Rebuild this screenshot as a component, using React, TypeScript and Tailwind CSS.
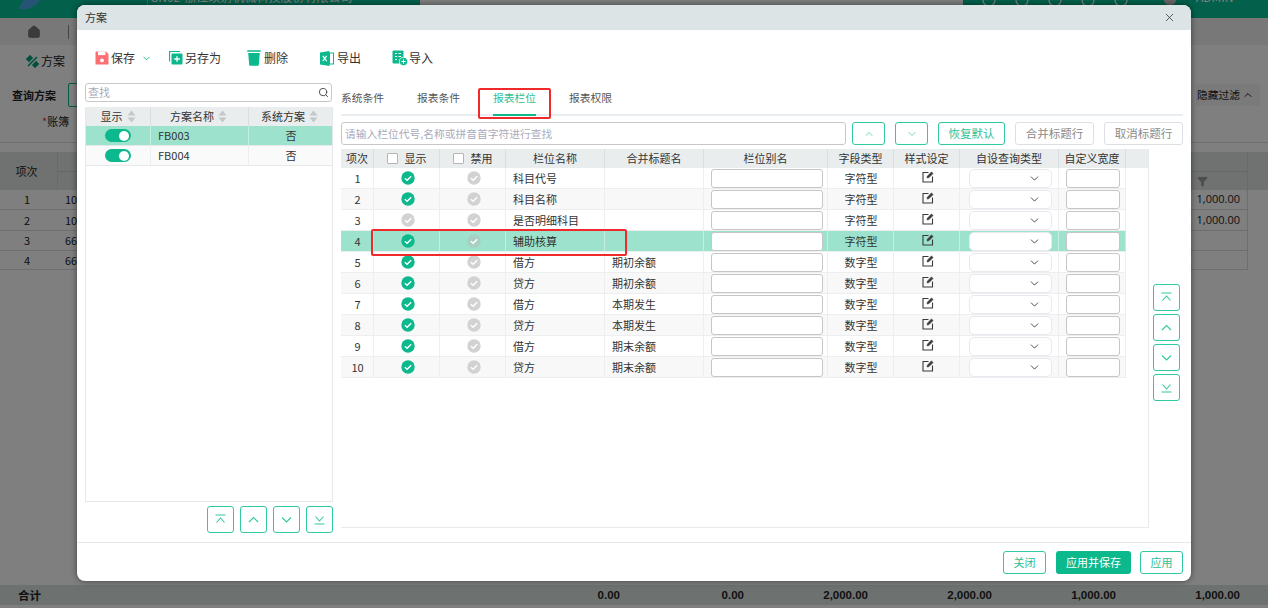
import React from "react";
import { ChevronDown, ChevronUp, Search, X, Home, Filter } from "lucide-react";

const G = "#0bb98c";
const font = { fontFamily: '"Noto Sans CJK SC", "Noto Sans", sans-serif' };

function Sort() {
  return (
    <svg width="9" height="13" viewBox="0 0 9 13" className="ml-1 shrink-0">
      <path d="M4.5 0.5 L8.5 5.5 H0.5 Z M0.5 7.5 H8.5 L4.5 12.5 Z" fill="#c3c9c9" />
    </svg>
  );
}

function Check({ on, dim }: { on: boolean; dim?: boolean }) {
  return (
    <svg width="14" height="14" viewBox="0 0 14 14">
      <circle cx="7" cy="7" r="6.7" fill={on ? G : dim ? "#a9cfc2" : "#d2d2d2"} />
      <path d="M3.8 7.2 L6.1 9.2 L10.2 5.2" fill="none" stroke="#fff" strokeWidth="1.4" />
    </svg>
  );
}

function Arrow({ kind }: { kind: "top" | "up" | "down" | "bottom" }) {
  return (
    <button className="w-[27px] h-[27px] rounded-[3px] border border-[#2fcaa0] bg-white flex items-center justify-center">
      <svg width="13" height="13" viewBox="0 0 13 13" fill="none" stroke="#2fcaa0" strokeWidth="1.1">
        {kind === "top" && <path d="M1.5 2 H11.5 M2.5 9.5 L6.5 5 L10.5 9.5" />}
        {kind === "up" && <path d="M2 9 L6.5 4.5 L11 9" />}
        {kind === "down" && <path d="M2 4.5 L6.5 9 L11 4.5" />}
        {kind === "bottom" && <path d="M2.5 3.5 L6.5 8 L10.5 3.5 M1.5 11 H11.5" />}
      </svg>
    </button>
  );
}

function Toggle() {
  return (
    <div className="w-[26px] h-[13px] rounded-full bg-[#0bb98c] flex items-center justify-end pr-[2px]">
      <div className="w-[10px] h-[10px] rounded-full bg-white" />
    </div>
  );
}

function EditIcon() {
  return (
    <svg width="12" height="12" viewBox="0 0 12 12" fill="none" stroke="#3a3a3a" strokeWidth="1.1" className="mb-[3px]">
      <path d="M6.5 1.5 H1 V11 H10.5 V5.5" />
      <path d="M5 7 L5.4 5.2 L9.4 0.9 L11.1 2.5 L7 6.6Z" fill="#3a3a3a" stroke="#3a3a3a" strokeWidth="0.6" />
    </svg>
  );
}

const SaveIcon = () => (
  <svg width="14" height="14" viewBox="0 0 14 14">
    <path d="M1 0.5 H11 L13.5 3 V13 a0.5 0.5 0 0 1 -0.5 0.5 H1 a0.5 0.5 0 0 1 -0.5 -0.5 V1 a0.5 0.5 0 0 1 0.5 -0.5Z" fill="#fb6f73" />
    <rect x="3" y="0.5" width="7.5" height="3.6" fill="#fff" />
    <circle cx="7" cy="9.4" r="1.9" fill="#fff" />
  </svg>
);
const SaveAsIcon = () => (
  <svg width="14" height="14" viewBox="0 0 14 14">
    <path d="M0.5 10.5 V0.5 H11" fill="none" stroke={G} strokeWidth="1.2" />
    <rect x="2.5" y="2.5" width="11" height="11" rx="1" fill={G} />
    <path d="M8 5.2 V10.8 M5.2 8 H10.8" stroke="#fff" strokeWidth="1.3" />
  </svg>
);
const TrashIcon = () => (
  <svg width="14" height="16" viewBox="0 0 14 16">
    <rect x="0.2" y="0.3" width="13.6" height="1.5" rx="0.5" fill={G} />
    <path d="M1.2 3 H12.8 L11.8 15 a0.8 0.8 0 0 1 -0.8 0.8 H3 a0.8 0.8 0 0 1 -0.8 -0.8Z" fill={G} />
  </svg>
);
const ExcelIcon = () => (
  <svg width="14" height="15" viewBox="0 0 14 15">
    <path d="M0 1.5 L9.5 0 V15 L0 13.5Z" fill={G} />
    <rect x="9.5" y="2" width="4" height="11" fill="none" stroke={G} strokeWidth="1" />
    <path d="M2.8 4.8 L6.7 10.2 M6.7 4.8 L2.8 10.2" stroke="#fff" strokeWidth="1.2" />
  </svg>
);
const ImportIcon = () => (
  <svg width="16" height="16" viewBox="0 0 16 16">
    <rect x="0.5" y="0.5" width="11" height="13" rx="1" fill={G} />
    <path d="M3 3.5 H5 M6.5 3.5 H9 M3 6.5 H5 M6.5 6.5 H9 M3 9.5 H5" stroke="#fff" strokeWidth="1.1" />
    <circle cx="11.5" cy="11.5" r="4.2" fill={G} stroke="#fff" strokeWidth="0.8" />
    <path d="M11.5 9.3 V13.7 M9.3 11.5 H13.7" stroke="#fff" strokeWidth="1.1" />
  </svg>
);

const rows = [
  { n: 1, show: true, name: "科目代号", group: "", type: "字符型" },
  { n: 2, show: true, name: "科目名称", group: "", type: "字符型" },
  { n: 3, show: false, name: "是否明细科目", group: "", type: "字符型" },
  { n: 4, show: true, name: "辅助核算", group: "", type: "字符型" },
  { n: 5, show: true, name: "借方", group: "期初余额", type: "数字型" },
  { n: 6, show: true, name: "贷方", group: "期初余额", type: "数字型" },
  { n: 7, show: true, name: "借方", group: "本期发生", type: "数字型" },
  { n: 8, show: true, name: "贷方", group: "本期发生", type: "数字型" },
  { n: 9, show: true, name: "借方", group: "期末余额", type: "数字型" },
  { n: 10, show: true, name: "贷方", group: "期末余额", type: "数字型" },
];

const COLS = "grid grid-cols-[33px_66px_66px_99px_99px_124px_66px_66px_99px_67px]";

function Box() {
  return <span className="w-[11px] h-[11px] bg-white border border-[#b5b5b5] rounded-[1px] mr-[7px] shrink-0" />;
}

function Head({ children }: { children: React.ReactNode }) {
  return <div className="flex items-center justify-center border-r border-[#d9dee3]">{children}</div>;
}

function FieldTable() {
  return (
    <div className="w-[808px] h-[379px] border border-[#e8eaee] border-l-0 border-t-0 text-[11px] text-[#333] leading-none">
      <div className="flex h-[19px] bg-[#e9eded]">
        <div className={`${COLS} w-[785px]`}>
          <Head>项次</Head>
          <Head><Box />显示</Head>
          <Head><Box />禁用</Head>
          <Head>栏位名称</Head>
          <Head>合并标题名</Head>
          <Head>栏位别名</Head>
          <Head>字段类型</Head>
          <Head>样式设定</Head>
          <Head>自设查询类型</Head>
          <Head>自定义宽度</Head>
        </div>
      </div>
      {rows.map((r) => {
        const sel = r.n === 4;
        const line = sel ? "border-[#c3eee0]" : "border-[#eceef0]";
        const text = `flex items-center justify-center pl-px pt-px border-r ${line}`;
        const center = `flex items-center justify-center pl-[2px] border-r ${line}`;
        return (
          <div
            key={r.n}
            className={`${COLS} w-[785px] h-[21px] border-b border-[#eceef0] ${sel ? "bg-[#9de2cc]" : r.n % 2 === 0 ? "bg-[#f8f8f8]" : "bg-white"}`}
          >
            <div className={text}>{r.n}</div>
            <div className={center}>
              <Check on={r.show} />
            </div>
            <div className={center}>
              <Check on={false} dim={sel} />
            </div>
            <div className={`flex items-center pl-[7px] pt-px border-r ${line}`}>{r.name}</div>
            <div className={`flex items-center pl-[7px] pt-px border-r ${line}`}>{r.group}</div>
            <div className={center}>
              <div className="w-[112px] h-[19px] bg-white border border-[#c6c6c6] rounded-[3px]" />
            </div>
            <div className={text}>{r.type}</div>
            <div className={center}>
              <EditIcon />
            </div>
            <div className={center}>
              <div className="w-[83px] h-[19px] bg-white border border-[#e8e8ee] rounded-[5px] flex items-center justify-end pr-[10px]">
                <ChevronDown size={13} color="#333" strokeWidth={1.6} />
              </div>
            </div>
            <div className={text}>
              <div className="w-[54px] h-[19px] bg-white border border-[#c6c6c6] rounded-[3px]" />
            </div>
          </div>
        );
      })}
    </div>
  );
}

const bgRows = [
  { h: "h-[20px]", v: "10", amt: "1,000.00" },
  { h: "h-[21px]", v: "10", amt: "1,000.00" },
  { h: "h-[20px]", v: "66", amt: "" },
  { h: "h-[19px]", v: "66", amt: "" },
];

function TopIcon() {
  return (
    <svg width="16" height="6" viewBox="0 0 16 6" className="shrink-0">
      <path d="M2 0 A6 6 0 0 0 14 0" fill="none" stroke="#fff" strokeWidth="1.2" />
    </svg>
  );
}

function Background() {
  return (
    <div className="w-[1268px] h-[608px] overflow-hidden flex flex-col bg-white text-[#222]">
      <div className="h-[18px] bg-[#04c096] flex items-start text-white text-[12px] leading-none shrink-0 overflow-hidden">
        <svg width="24" height="9" viewBox="0 0 24 9" className="ml-[16px] shrink-0">
          <path d="M2 9 L8 0 H24 L20 5 L12 9Z" fill="#4aa8e8" />
        </svg>
        <div className="ml-[107px] w-px h-[6px] bg-white/40" />
        <span className="ml-[2px] -mt-[9px] w-[270px] whitespace-nowrap">GN02-浙江映射机械科技股份有限公司</span>
        <div className="h-[5px] w-[543px] bg-white" />
        <div className="ml-[18px] flex gap-[17px]">
          <TopIcon />
          <TopIcon />
          <TopIcon />
          <TopIcon />
          <TopIcon />
        </div>
        <div className="ml-[35px] w-[12px] h-[5px] rounded-b-full bg-[#ccc]" />
        <span className="ml-[20px] -mt-[9px]">ADMIN</span>
      </div>
      <div className="h-[27px] bg-[#eef0ee] flex items-center shrink-0">
        <Home size={14} className="ml-[27px]" fill="#777" color="#777" />
        <div className="w-px h-[14px] bg-[#888] ml-[27px]" />
      </div>
      <div className="h-[32px] bg-white flex items-center shrink-0 text-[12px]">
        <svg width="13" height="13" viewBox="0 0 13 13" className="ml-[26px] mr-[2px]">
          <path d="M1 4 L4 1 L6 3 L3 6Z M7 10 L10 7 L12 9 L9 12Z M2 11 L11 2" stroke="#00a07a" strokeWidth="1.6" fill="#00a07a" />
        </svg>
        方案
      </div>
      <div className="h-[66px] border-b border-[#ddd] shrink-0 flex flex-col">
        <div className="flex items-center h-[36px] text-[11px] font-bold pl-[12px]">
          查询方案
          <div className="ml-[12px] w-[20px] h-[24px] border border-[#0bb98c] rounded-[2px]" />
          <div className="ml-auto mr-[8px] h-[22px] w-[64px] bg-[#f4f4f4] pl-[1px] flex items-center text-[10.75px] font-normal whitespace-nowrap">
            隐藏过滤
            <ChevronUp size={12} className="ml-[2px]" />
          </div>
        </div>
        <div className="text-[11px] pl-[42px] leading-none mt-[3px]">
          <span className="text-[#e03030]">*</span>账簿
        </div>
      </div>
      <div className="h-[9px] shrink-0" />
      <div className="h-[38px] bg-[#dfe5e3] flex text-[11px] shrink-0">
        <div className="w-[58px] flex items-center justify-center border-r border-[#cfd6d3] pr-[4px]">项次</div>
        <div className="w-[1190px] flex flex-col border-r border-[#cfd6d3]">
          <div className="h-[20px] border-b border-[#c8cfcc]" />
          <div className="flex-1 flex items-center justify-end pr-[39px]">
            <Filter size={11} fill="#999" color="#999" />
          </div>
        </div>
      </div>
      {bgRows.map((r, i) => (
        <div key={i} className={`${r.h} w-[1248px] border-b border-r border-[#ddd] flex items-center text-[11px] shrink-0`}>
          <span className="w-[58px] text-center pr-[4px]">{i + 1}</span>
          <span className="ml-[7px]">{r.v}</span>
          <span className="ml-auto mr-[7px]" style={{ fontFamily: '"Open Sans", sans-serif' }}>{r.amt}</span>
        </div>
      ))}
      <div className="flex-1" />
      <div className="h-[20px] mb-[3px] pt-px bg-[#dbe2de] flex items-center text-[11.5px] font-bold shrink-0">
        <span className="ml-[18px]">合计</span>
        <div className="ml-auto flex mr-[28px]" style={{ fontFamily: '"Liberation Sans", sans-serif' }}>
          {["0.00", "0.00", "2,000.00", "2,000.00", "1,000.00", "1,000.00"].map((v, i) => (
            <span key={i} className="w-[124px] text-right">{v}</span>
          ))}
        </div>
      </div>
    </div>
  );
}

export default function App() {
  return (
    <div className="relative w-[1268px] h-[608px] overflow-hidden" style={font}>
      <Background />
      <div className="absolute inset-0 bg-black/50" />
      <div className="absolute left-[77px] top-[5px] w-[1114px] h-[576px] bg-white rounded-[8px] overflow-hidden flex flex-col text-[#333] shadow-[0_0_6px_rgba(0,0,0,0.5)]">
        {/* title */}
        <div className="h-[25px] bg-[#dce4e6] flex items-center justify-between pl-[8px] pr-[15px] text-[11px] shrink-0">
          <span>方案</span>
          <X size={13} color="#333" strokeWidth={1.4} />
        </div>
        {/* toolbar */}
        <div className="h-[53px] flex items-center text-[12px] shrink-0 pl-[18px] pt-[3px]">
          <SaveIcon />
          <span className="ml-[2px]">保存</span>
          <ChevronDown size={11} color={G} className="ml-[6px]" />
          <div className="ml-[17px]"><SaveAsIcon /></div>
          <span className="ml-[2px]">另存为</span>
          <div className="ml-[26px]"><TrashIcon /></div>
          <span className="ml-[3px]">删除</span>
          <div className="ml-[32px]"><ExcelIcon /></div>
          <span className="ml-[3px]">导出</span>
          <div className="ml-[31px]"><ImportIcon /></div>
          <span className="ml-[1px]">导入</span>
        </div>
        {/* body */}
        <div className="flex-1 flex pl-[8px] pr-[8px] min-h-0">
          {/* left */}
          <div className="w-[248px] shrink-0 flex flex-col">
            <div className="h-[19px] mr-px border border-[#c8c8c8] rounded-[3px] flex items-center justify-between pl-[2px] pr-[2px] text-[11px] text-[#aab]">
              <span>查找</span>
              <Search size={11} color="#444" />
            </div>
            <div className="mt-[5px] h-[395px] border border-[#e6e8ec] border-t-0 text-[11px] leading-none">
              <div className="grid grid-cols-[65px_98px_84px] h-[19px] bg-[#e9eded]">
                <div className="flex items-center justify-center border-r border-[#d9dee3]">显示<Sort /></div>
                <div className="flex items-center justify-center border-r border-[#d9dee3] pr-[2px]">方案名称<Sort /></div>
                <div className="flex items-center justify-center pr-[3px]">系统方案<Sort /></div>
              </div>
              {["FB003", "FB004"].map((n, i) => (
                <div
                  key={n}
                  className={`grid grid-cols-[65px_98px_84px] h-[20px] border-b border-[#e6e8ec] ${i === 0 ? "bg-[#9de2cc]" : "bg-[#fafafa]"}`}
                >
                  <div className={`flex items-center justify-center border-r ${i === 0 ? "border-[#c3eee0]" : "border-[#eceef0]"}`}><Toggle /></div>
                  <div className={`flex items-center pl-[7px] border-r ${i === 0 ? "border-[#c3eee0]" : "border-[#eceef0]"}`}>{n}</div>
                  <div className="flex items-center justify-center">否</div>
                </div>
              ))}
            </div>
            <div className="mt-[4px] flex justify-end gap-[6px]">
              <Arrow kind="top" />
              <Arrow kind="up" />
              <Arrow kind="down" />
              <Arrow kind="bottom" />
            </div>
          </div>
          {/* right */}
          <div className="ml-[8px] flex-1 flex flex-col min-w-0">
            <div className="h-[33px] border-b-2 border-[#e9edf2] flex items-start text-[10.75px] text-[#555] leading-none relative">
              <span className="mt-[10px]">系统条件</span>
              <span className="mt-[10px] ml-[33px]">报表条件</span>
              <span className="mt-[10px] ml-[33px] text-[#2bbf97] h-[23px] border-b-2 border-[#0bb98c]">报表栏位</span>
              <span className="mt-[10px] ml-[33px]">报表权限</span>
              <div className="absolute left-[137px] top-[5px] w-[73px] h-[31px] border-2 border-[#f02a2a] rounded-[2px]" />
            </div>
            <div className="mt-[6px] flex h-[23px] text-[11px] leading-none">
              <div className="w-[505px] border border-[#c8c8c8] rounded-[3px] flex items-center pl-[3px] pt-px text-[10.75px] text-[#aab]">
                请输入栏位代号,名称或拼音首字符进行查找
              </div>
              <button className="ml-[6px] w-[33px] border border-[#2fcaa0] rounded-[3px] flex items-center justify-center">
                <ChevronUp size={12} color="#2fcaa0" strokeWidth={1.4} />
              </button>
              <button className="ml-[10px] w-[33px] border border-[#2fcaa0] rounded-[3px] flex items-center justify-center">
                <ChevronDown size={12} color="#2fcaa0" strokeWidth={1.4} />
              </button>
              <button className="ml-[10px] w-[67px] border border-[#2fcaa0] rounded-[3px] text-[#2bbf97] text-[11.5px]">恢复默认</button>
              <button className="ml-[10px] w-[79px] border border-[#dcdfe4] rounded-[3px] text-[#8a8a8a] text-[11.5px]">合并标题行</button>
              <button className="ml-[10px] w-[79px] border border-[#dcdfe4] rounded-[3px] text-[#8a8a8a] text-[11.5px]">取消标题行</button>
            </div>
            <div className="mt-[4px] flex">
              <FieldTable />
              <div className="ml-[4px] pt-[135px] flex flex-col gap-[3px]">
                <Arrow kind="top" />
                <Arrow kind="up" />
                <Arrow kind="down" />
                <Arrow kind="bottom" />
              </div>
            </div>
          </div>
        </div>
        {/* footer */}
        <div className="h-[39px] border-t border-[#e6e8ec] flex items-center justify-end pr-[8px] text-[11px] shrink-0">
          <button className="w-[43px] h-[23px] border border-[#2fcaa0] rounded-[3px] text-[#2bbf97]">关闭</button>
          <button className="ml-[10px] w-[75px] h-[23px] bg-[#0bb98c] rounded-[3px] text-white">应用并保存</button>
          <button className="ml-[9px] w-[43px] h-[23px] border border-[#2fcaa0] rounded-[3px] text-[#2bbf97]">应用</button>
        </div>
        <div className="absolute left-[294px] top-[224px] w-[256px] h-[27px] border-2 border-[#f02a2a] rounded-[2px]" />
      </div>
    </div>
  );
}
